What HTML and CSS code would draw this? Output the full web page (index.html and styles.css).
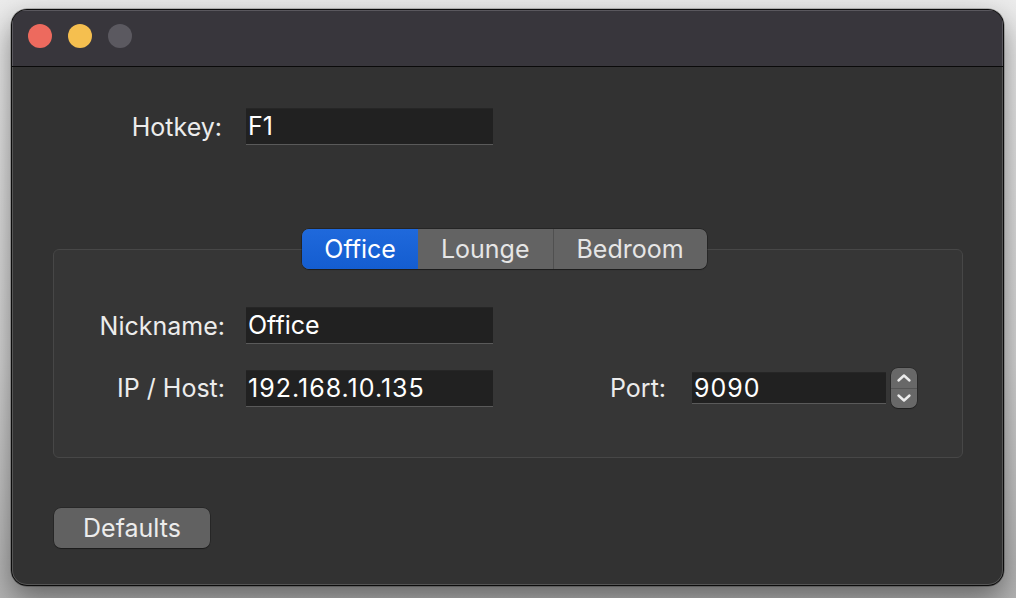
FILE: index.html
```html
<!DOCTYPE html>
<html>
<head>
<meta charset="utf-8">
<link rel="stylesheet" href="styles.css">
</head>
<body>
<div class="window">
  <div class="titlebar">
    <span class="light red"></span>
    <span class="light yellow"></span>
    <span class="light gray"></span>
  </div>
  <div class="content">
    <div class="row hotkey-row">
      <label class="label hotkey-label">Hotkey:</label>
      <div class="field">F1</div>
    </div>
    <div class="tabs">
      <div class="seg active">Office</div>
      <div class="seg">Lounge</div>
      <div class="seg">Bedroom</div>
    </div>
    <div class="groupbox">
      <div class="row">
        <label class="label group-label">Nickname:</label>
        <div class="field">Office</div>
      </div>
      <div class="row ip-row">
        <label class="label group-label">IP / Host:</label>
        <div class="field num">192.168.10.135</div>
        <label class="label port-label">Port:</label>
        <div class="field port-field num">9090</div>
        <div class="stepper">
          <div class="step up">
            <svg width="16" height="10" viewBox="0 0 16 10"><path d="M2.5 7.5 L8 2.5 L13.5 7.5" fill="none" stroke="#ececec" stroke-width="2.4" stroke-linecap="round" stroke-linejoin="round"/></svg>
          </div>
          <div class="step down">
            <svg width="16" height="10" viewBox="0 0 16 10"><path d="M2.5 2.5 L8 7.5 L13.5 2.5" fill="none" stroke="#ececec" stroke-width="2.4" stroke-linecap="round" stroke-linejoin="round"/></svg>
          </div>
        </div>
      </div>
    </div>
    <div class="footer">
      <button class="btn">Defaults</button>
    </div>
  </div>
</div>
</body>
</html>
```
FILE: styles.css
```css
* { box-sizing: border-box; }
html, body { margin: 0; padding: 0; }
body {
  width: 1016px;
  height: 598px;
  overflow: hidden;
  background: linear-gradient(180deg, #ececec 0%, #d6d6d6 60%, #b4b4b4 100%);
  font-family: Inter, "Noto Sans", "Liberation Sans", sans-serif;
  padding: 9px 12px 0 11px;
}
.window {
  width: 993px;
  height: 577px;
  border: 1px solid #0c0c0c;
  border-radius: 16px;
  background: #323232;
  box-shadow: 0 0 0 0.5px rgba(0,0,0,0.4), 0 12px 30px rgba(0,0,0,0.45);
  overflow: hidden;
  display: flex;
  flex-direction: column;
}
.titlebar {
  height: 57px;
  flex: none;
  background: #38363c;
  border-bottom: 1px solid #0a0a0a;
  display: flex;
  align-items: center;
  gap: 16px;
  padding: 0 0 4px 16px;
  box-shadow: inset 1px 1px 0 #5a585e, inset -1px 0 0 #5a585e;
}
.light {
  width: 24px;
  height: 24px;
  border-radius: 50%;
  display: block;
}
.red { background: #ed6a5e; }
.yellow { background: #f5bf4f; }
.gray { background: #5b5960; }

.content {
  flex: 1;
  display: flex;
  flex-direction: column;
  color: #e6e6e6;
  font-size: 25px;
  box-shadow: inset 1px 0 0 #555, inset -1px 0 0 #555, inset 0 -1px 0 #555;
  border-radius: 0 0 15px 15px;
}
.row {
  display: flex;
  align-items: center;
}
.hotkey-row {
  margin-top: 41px;
}
.label {
  text-align: right;
  color: #ececec;
  flex: none;
  line-height: 28px;
}
.hotkey-label {
  width: 210px;
  margin-right: 24px;
}
.group-label {
  width: 171px;
  margin-right: 21px;
}
.field {
  width: 247px;
  height: 37px;
  background: #212121;
  border-bottom: 1px solid #5a5a5a;
  border-top: 1px solid #262626;
  color: #ffffff;
  padding: 0 2px;
  line-height: 35px;
  flex: none;
}
.num {
  letter-spacing: 1px;
}
.tabs {
  margin-top: 84px;
  align-self: center;
  margin-right: 6px;
  display: flex;
  height: 40px;
  border-radius: 7px;
  background: #636363;
  box-shadow: 0 0 0 0.5px rgba(0,0,0,0.5), 0 1px 1px rgba(0,0,0,0.3);
  overflow: hidden;
  position: relative;
  z-index: 1;
}
.seg {
  height: 40px;
  line-height: 40px;
  padding: 0 23px;
  color: #e6e6e6;
}
.seg + .seg { border-left: 1px solid #505050; }
.seg.active {
  background: linear-gradient(180deg, #1f69dc 0%, #145dd0 100%);
  color: #ffffff;
  padding: 0 22px;
}
.seg.active + .seg { border-left: none; }
.groupbox {
  margin: -20px 40px 0 41px;
  border: 1px solid #474747;
  border-radius: 6px;
  background: #363636;
  padding: 57px 0 49px 0;
  display: flex;
  flex-direction: column;
  gap: 24px;
}
.port-label {
  margin-left: 117px;
  margin-right: 26px;
}
.port-field {
  width: 194px;
  height: 32px;
  line-height: 31px;
}
.stepper {
  margin-left: 5px;
  width: 26px;
  height: 40px;
  border-radius: 7px;
  background: #686868;
  display: flex;
  flex-direction: column;
  box-shadow: 0 0 0 0.5px rgba(0,0,0,0.4), 0 1px 1px rgba(0,0,0,0.3);
}
.step {
  flex: 1;
  display: flex;
  align-items: center;
  justify-content: center;
}
.step.up { border-bottom: 1px solid #555; }
.footer {
  margin-top: 50px;
  padding-left: 42px;
}
.btn {
  width: 156px;
  height: 40px;
  border: none;
  border-radius: 7px;
  background: #616161;
  color: #ececec;
  font-family: inherit;
  font-size: 25px;
  box-shadow: 0 0 0 0.5px rgba(0,0,0,0.4), 0 1px 1px rgba(0,0,0,0.3);
  padding: 0;
}
```
